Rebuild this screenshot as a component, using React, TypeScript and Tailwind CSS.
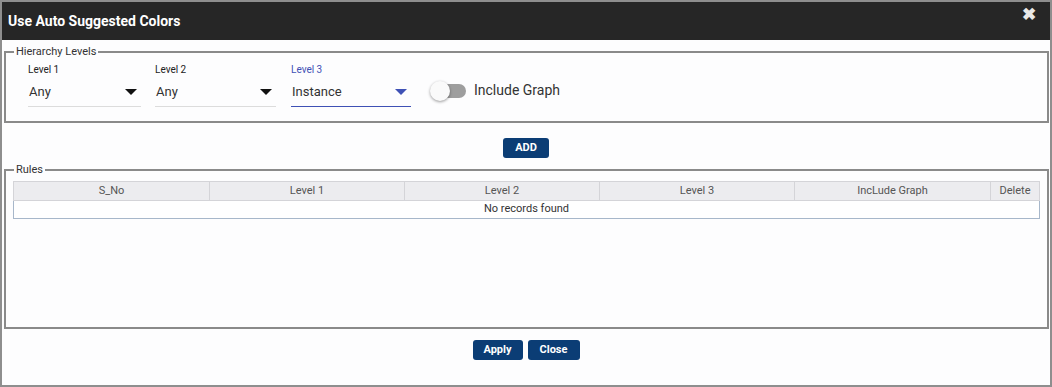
import React, { useState } from 'react';

const columns = [
  { key: 'sno', label: 'S_No', width: 'w-[195px]' },
  { key: 'l1', label: 'Level 1', width: 'w-[195px]' },
  { key: 'l2', label: 'Level 2', width: 'w-[195px]' },
  { key: 'l3', label: 'Level 3', width: 'w-[195px]' },
  { key: 'graph', label: 'IncLude Graph', width: 'w-[196px]' },
  { key: 'del', label: 'Delete', width: 'flex-1' },
];

interface LevelSelectProps {
  label: string;
  value: string;
  width: string;
  active?: boolean;
}

const LevelSelect: React.FC<LevelSelectProps> = ({ label, value, width, active }) => {
  return (
    <div className={width}>
      <div className={`text-[10px] leading-[12px] ${active ? 'text-[#3f51b5]' : 'text-[#222]'}`}>{label}</div>
      <div
        className={`mt-[4px] h-[27px] pb-[3px] flex items-center justify-between border-b ${
          active ? 'border-[#3f51b5]' : 'border-[#dcdcdc]'
        }`}
      >
        <span className="text-[13px] text-[#333] pl-[1px]">{value}</span>
        <svg width="12" height="6" viewBox="0 0 12 6" className="mr-[4px]">
          <path d="M0 0 L12 0 L6 6 Z" fill={active ? '#3f51b5' : '#111'} />
        </svg>
      </div>
    </div>
  );
};

const App: React.FC = () => {
  const [includeGraph, setIncludeGraph] = useState(false);

  return (
    <div className="w-[1052px] h-[387px] border-2 border-[#8e8e8e] bg-[#fdfdfe] flex flex-col font-['Roboto',sans-serif] text-[#333]">
      <div className="h-[38px] bg-[#262626] flex items-start justify-between pl-[6px] pr-[14px]">
        <h2 className="mt-[10px] text-[14px] leading-[18px] font-bold text-white">Use Auto Suggested Colors</h2>
        <button className="mt-[3px] text-[#e8e8e8] text-[17px] font-bold leading-[18px]">✖</button>
      </div>

      <fieldset className="mt-[5px] ml-[2px] mr-[1px] h-[78px] border-2 border-[#8a8a8a]">
        <legend className="ml-[8px] px-[2px] text-[11px] leading-[13px] text-[#333]">Hierarchy Levels</legend>
        <div className="mt-[6px] pl-[22px] flex items-start">
          <LevelSelect label="Level 1" value="Any" width="w-[113px]" />
          <div className="w-[14px]" />
          <LevelSelect label="Level 2" value="Any" width="w-[121px]" />
          <div className="w-[15px]" />
          <LevelSelect label="Level 3" value="Instance" width="w-[120px]" active />
          <div className="ml-[19px] mt-[16px] flex items-center">
            <button
              onClick={() => setIncludeGraph(!includeGraph)}
              className="relative w-[36px] h-[20px] flex items-center"
            >
              <span className="absolute left-[2px] right-0 h-[14px] rounded-full bg-[#9e9e9e]" />
              <span className="absolute left-0 top-0 w-[20px] h-[20px] rounded-full bg-[#fafafa] shadow-[0_1px_3px_rgba(0,0,0,0.4)]" />
            </button>
            <span className="ml-[8px] text-[14px] text-[#333]">Include Graph</span>
          </div>
        </div>
      </fieldset>

      <div className="flex justify-center mt-[15px]">
        <button className="w-[46px] h-[20px] rounded-[3px] bg-[#0b3d75] text-white text-[11px] font-bold">ADD</button>
      </div>

      <fieldset className="mt-[5px] ml-[2px] mr-[1px] h-[166px] border-2 border-[#8a8a8a]">
        <legend className="ml-[8px] px-[2px] text-[11px] leading-[13px] text-[#333]">Rules</legend>
        <div className="mt-[5px] ml-[7px] w-[1027px]">
          <div className="flex h-[20px] bg-[#ececef] border border-[#d4d4d8] text-[11px] text-[#555]">
            {columns.map((c, i) => (
              <div
                key={c.key}
                className={`${c.width} flex items-center justify-center ${i > 0 ? 'border-l border-[#d4d4d8]' : ''}`}
              >
                {c.label}
              </div>
            ))}
          </div>
          <div className="h-[18px] border border-t-0 border-[#a7b7ca] bg-white flex items-center justify-center text-[11px] text-[#333]">
            No records found
          </div>
        </div>
      </fieldset>

      <div className="flex-1 flex justify-center pt-[11px] gap-[5px]">
        <button className="w-[50px] h-[20px] rounded-[3px] bg-[#0b3d75] text-white text-[11px] font-bold">Apply</button>
        <button className="w-[52px] h-[20px] rounded-[3px] bg-[#0b3d75] text-white text-[11px] font-bold">Close</button>
      </div>
    </div>
  );
};

export default App;
